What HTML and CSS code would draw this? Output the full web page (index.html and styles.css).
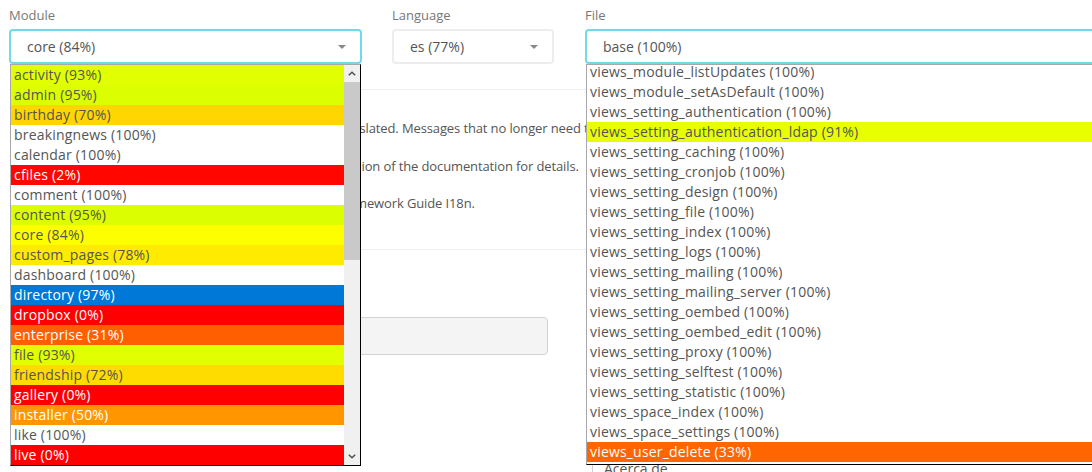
FILE: index.html
```html
<!DOCTYPE html>
<html lang="en">
<head>
<meta charset="utf-8">
<title>Translation editor</title>
<link rel="stylesheet" href="styles.css">
</head>
<body>
<div class="page">
  <div class="filters">
    <div class="group g-module">
      <label class="lbl">Module</label>
      <div class="select-wrap">
        <div class="select focus"><span>core (84%)</span><span class="caret"></span></div>
        <div class="dropdown module-list">
          <ul class="options">
            <li style="background:#e1ff00">activity (93%)</li>
            <li style="background:#dbff00">admin (95%)</li>
            <li style="background:#ffd600">birthday (70%)</li>
            <li>breakingnews (100%)</li>
            <li>calendar (100%)</li>
            <li class="dark" style="background:#ff0600">cfiles (2%)</li>
            <li>comment (100%)</li>
            <li style="background:#dbff00">content (95%)</li>
            <li style="background:#fdff00">core (84%)</li>
            <li style="background:#ffeb00">custom_pages (78%)</li>
            <li>dashboard (100%)</li>
            <li class="hover">directory (97%)</li>
            <li class="dark" style="background:#ff0000">dropbox (0%)</li>
            <li class="dark" style="background:#ff5f00">enterprise (31%)</li>
            <li style="background:#e1ff00">file (93%)</li>
            <li style="background:#ffdc00">friendship (72%)</li>
            <li class="dark" style="background:#ff0000">gallery (0%)</li>
            <li class="dark" style="background:#ff9600">installer (50%)</li>
            <li>like (100%)</li>
            <li class="dark" style="background:#ff0000">live (0%)</li>
          </ul>
          <div class="scrollbar">
            <div class="sb-btn"><svg width="8" height="5" viewBox="0 0 8 5"><polyline points="0.8,4.3 4,1.2 7.2,4.3" fill="none" stroke="#505050" stroke-width="1.5"/></svg></div>
            <div class="sb-track"><div class="sb-thumb"></div></div>
            <div class="sb-btn"><svg width="8" height="5" viewBox="0 0 8 5"><polyline points="0.8,0.7 4,3.8 7.2,0.7" fill="none" stroke="#505050" stroke-width="1.5"/></svg></div>
          </div>
        </div>
      </div>
    </div>
    <div class="group g-lang">
      <label class="lbl">Language</label>
      <div class="select-wrap">
        <div class="select"><span>es (77%)</span><span class="caret"></span></div>
      </div>
    </div>
    <div class="group g-file">
      <label class="lbl">File</label>
      <div class="select-wrap">
        <div class="select focus"><span>base (100%)</span><span class="caret"></span></div>
        <div class="dropdown file-list">
          <ul class="options scrolled">
            <li>views_module_listUpdates (100%)</li>
            <li>views_module_setAsDefault (100%)</li>
            <li>views_setting_authentication (100%)</li>
            <li style="background:#e8ff00">views_setting_authentication_ldap (91%)</li>
            <li>views_setting_caching (100%)</li>
            <li>views_setting_cronjob (100%)</li>
            <li>views_setting_design (100%)</li>
            <li>views_setting_file (100%)</li>
            <li>views_setting_index (100%)</li>
            <li>views_setting_logs (100%)</li>
            <li>views_setting_mailing (100%)</li>
            <li>views_setting_mailing_server (100%)</li>
            <li>views_setting_oembed (100%)</li>
            <li>views_setting_oembed_edit (100%)</li>
            <li>views_setting_proxy (100%)</li>
            <li>views_setting_selftest (100%)</li>
            <li>views_setting_statistic (100%)</li>
            <li>views_space_index (100%)</li>
            <li>views_space_settings (100%)</li>
            <li class="dark" style="background:#ff6500">views_user_delete (33%)</li>
          </ul>
        </div>
      </div>
    </div>
  </div>

  <div class="layout">
    <div class="main">
      <hr class="rule rule1">
      <div class="help">
        <p><span class="cut c1">Strings highlighted in red have not been tran</span>slated. Messages that no longer need translation are marked with @@.</p>
        <p><span class="cut c2">See the translation sect</span>ion of the documentation for details.</p>
        <p><span class="cut c3">For more information read the Yii Fra</span>mework Guide I18n.</p>
      </div>
      <hr class="rule rule2">
      <div class="search"></div>
    </div>
    <div class="side">
      <ul class="nav">
        <li>Acerca de</li>
      </ul>
    </div>
  </div>
</div>
</body>
</html>
```

FILE: styles.css
```css
html, body {
  margin: 0;
  padding: 0;
  overflow: hidden;
  background: #fff;
}

body {
  font-family: "Open Sans", "Noto Sans", sans-serif;
  color: #555;
  width: 1092px;
  height: 472px;
}

.page {
  position: relative;
}

.filters {
  display: flex;
  column-gap: 30px;
  padding: 6px 0 0 9px;
  position: relative;
  z-index: 5;
}

.group {
  display: flex;
  flex-direction: column;
  flex: none;
}

.g-module { width: 353px; }
.g-lang { width: 162px; }
.g-file { width: 560px; margin-left: 1px; }

.lbl {
  font-size: 13px;
  line-height: 18px;
  color: #777;
  margin-bottom: 5px;
}

.select-wrap {
  position: relative;
}

.select {
  box-sizing: border-box;
  height: 35px;
  border: 2px solid #ededed;
  border-radius: 4px;
  padding: 0 14px 0 16px;
  font-size: 14px;
  line-height: 31px;
  color: #555;
  display: flex;
  justify-content: space-between;
  align-items: center;
  background: #fff;
}

.select.focus {
  border-color: #6fdbe8;
}

.caret {
  width: 0;
  height: 0;
  border-left: 4px solid transparent;
  border-right: 4px solid transparent;
  border-top: 4px solid #888;
}

.dropdown {
  position: absolute;
  top: 35px;
  left: 1px;
  background: #fff;
  border-top: 1px solid #a8a8a8;
  border-left: 1px solid #a8a8a8;
  border-bottom: 1px solid #000;
  overflow: hidden;
  display: flex;
}

.module-list {
  width: 351px;
  box-sizing: border-box;
  border-right: 1px solid #000;
  height: 402px;
}

.file-list {
  width: 600px;
  box-sizing: border-box;
  height: 401px;
}

.options {
  list-style: none;
  margin: 0;
  padding: 0;
  flex: 1;
  font-size: 14px;
  line-height: 20px;
  letter-spacing: 0.18px;
}

.options.scrolled {
  margin-top: -3px;
}

.options li {
  height: 20px;
  padding-left: 3px;
  white-space: nowrap;
  color: #555;
}

.options li.dark {
  color: #fff;
}

.options li.hover {
  background: #0078d7;
  color: #fff;
}

.scrollbar {
  width: 16px;
  flex: none;
  display: flex;
  flex-direction: column;
  background: #f0f0f0;
}

.sb-btn {
  height: 17px;
  display: flex;
  align-items: center;
  justify-content: center;
  flex: none;
}

.sb-track {
  flex: 1;
}

.sb-thumb {
  height: 178px;
  background: #c9c9c9;
}

.layout {
  display: grid;
  grid-template-columns: 577px 1fr;
  column-gap: 6px;
  padding-left: 9px;
}

.main {
  min-width: 0;
}

.rule {
  border: 0;
  border-top: 1px solid #eee;
  height: 0;
  margin: 0;
}

.rule1 {
  margin-top: 25px;
}

.help {
  padding: 30px 0 0 15px;
  font-size: 13px;
  line-height: 17.5px;
  letter-spacing: -0.12px;
  color: #555;
}

.help p {
  margin: 0 0 20px;
  white-space: nowrap;
}

.cut {
  display: inline-block;
  vertical-align: top;
  overflow: hidden;
  white-space: nowrap;
}

.c1 { width: 335.5px; }
.c2 { width: 337.5px; }
.c3 { width: 331px; }

.rule2 {
  margin-top: 36px;
}

.search {
  margin: 67px 38px 0 15px;
  height: 38px;
  box-sizing: border-box;
  border: 1px solid #d3d3d3;
  border-radius: 4px;
  background: #f4f4f4;
}

.side {
  padding-top: 387px;
}

.nav {
  list-style: none;
  margin: 0;
  padding: 0;
  border-left: 1px solid #d0d0d0;
  font-size: 14px;
  line-height: 20px;
}

.nav li {
  padding: 8px 11px;
  color: #555;
}
```
